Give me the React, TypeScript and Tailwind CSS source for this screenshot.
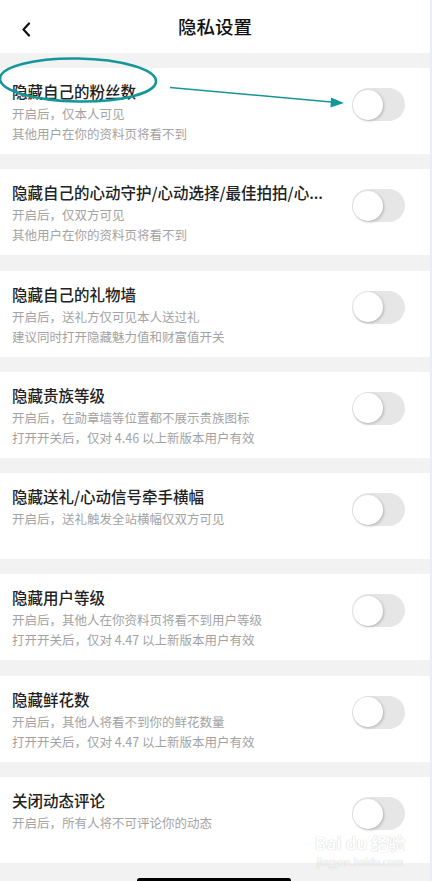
import React from "react";

const items: { title: string; lines: string[] }[] = [
  { title: "隐藏自己的粉丝数", lines: ["开启后，仅本人可见", "其他用户在你的资料页将看不到"] },
  { title: "隐藏自己的心动守护/心动选择/最佳拍拍/心...", lines: ["开启后，仅双方可见", "其他用户在你的资料页将看不到"] },
  { title: "隐藏自己的礼物墙", lines: ["开启后，送礼方仅可见本人送过礼", "建议同时打开隐藏魅力值和财富值开关"] },
  { title: "隐藏贵族等级", lines: ["开启后，在勋章墙等位置都不展示贵族图标", "打开开关后，仅对 4.46 以上新版本用户有效"] },
  { title: "隐藏送礼/心动信号牵手横幅", lines: ["开启后，送礼触发全站横幅仅双方可见"] },
  { title: "隐藏用户等级", lines: ["开启后，其他人在你资料页将看不到用户等级", "打开开关后，仅对 4.47 以上新版本用户有效"] },
  { title: "隐藏鲜花数", lines: ["开启后，其他人将看不到你的鲜花数量", "打开开关后，仅对 4.47 以上新版本用户有效"] },
  { title: "关闭动态评论", lines: ["开启后，所有人将不可评论你的动态"] },
];

function Toggle() {
  return (
    <div className="relative mt-[20px] h-[33px] w-[53px] shrink-0 rounded-full bg-[#e6e6e6]">
      <div className="absolute left-[1px] top-[1.5px] h-[30px] w-[30px] rounded-full bg-white shadow-[1px_1px_3px_rgba(0,0,0,0.22)]" />
    </div>
  );
}

export default function App() {
  return (
    <div
      className="relative h-[881px] w-[432px] overflow-hidden bg-[#f2f2f2]"
      style={{ fontFamily: '"Noto Sans CJK SC", "Noto Sans", sans-serif' }}
    >
      <div className="flex w-[430px] flex-col">
        <div className="relative flex h-[53px] items-center justify-center bg-white">
          <svg className="absolute left-[21px] top-[22px]" width="10" height="15" viewBox="0 0 10 15">
            <path d="M8 1.5 L2.5 7.5 L8 13.5" fill="none" stroke="#111" strokeWidth="2.2" strokeLinecap="round" strokeLinejoin="round" />
          </svg>
          <span className="text-[18.5px] font-medium leading-none text-[#111]">隐私设置</span>
        </div>
        <div className="mt-[15px] flex flex-col gap-[15.3px]">
          {items.map((it, i) => (
            <div key={i} className="flex h-[86px] items-start bg-white pl-[12px] pr-[25px]">
              <div className="min-w-0 flex-1 pr-[8px] pt-[12px]">
                <div className="whitespace-nowrap text-[15.5px] font-medium leading-[22px] text-[#222]">{it.title}</div>
                <div className="mt-[2px]">
                  {it.lines.map((l, j) => (
                    <div key={j} className="whitespace-nowrap text-[12.5px] leading-[20px] text-[#a3a3a3]">
                      {l}
                    </div>
                  ))}
                </div>
              </div>
              <Toggle />
            </div>
          ))}
        </div>
      </div>
      <div className="absolute right-0 top-0 h-full w-[2px] bg-[#e8eef8]" />

      <svg className="pointer-events-none absolute left-0 top-0" width="432" height="140" viewBox="0 0 432 140">
        <ellipse cx="78" cy="80" rx="78" ry="21.5" fill="none" stroke="#15979a" strokeWidth="2.6" transform="rotate(1 78 80)" />
        <line x1="170" y1="87.5" x2="334" y2="102.2" stroke="#15979a" strokeWidth="1.6" />
        <path d="M344 103 L331 97.5 L330.5 107.5 Z" fill="#15979a" />
      </svg>

      <div className="pointer-events-none absolute left-[314px] top-[834px] flex w-[92px] flex-col items-center leading-none text-white opacity-90 [text-shadow:0_0_1px_rgba(0,0,0,0.3)]">
        <span className="text-[17px] font-bold">Bai du 经验</span>
        <span className="mt-[6px] text-[10px]">jingyan.baidu.com</span>
      </div>

      <div className="absolute left-[137px] top-[878px] h-[5px] w-[154px] rounded-full bg-black" />
    </div>
  );
}
